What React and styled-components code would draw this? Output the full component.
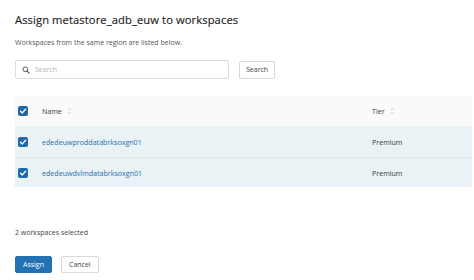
import React from "react";
import styled, { createGlobalStyle } from "styled-components";

const Global = createGlobalStyle`
  html, body { margin: 0; padding: 0; background: #fff; }
  body { font-family: "Open Sans", "Noto Sans", sans-serif; color: #333; }
  * { box-sizing: border-box; }
`;

const Page = styled.div`
  width: 474px;
  height: 280px;
  padding: 12px 2px 0 15px;
  display: flex;
  flex-direction: column;
`;

const Title = styled.h1`
  margin: 0;
  font-size: 11.2px;
  line-height: 16px;
  font-weight: 400;
  color: #222;
  letter-spacing: 0.1px;
  -webkit-text-stroke: 0.15px #222;
`;

const Subtitle = styled.p`
  margin: 8px 0 0;
  font-size: 7px;
  line-height: 14px;
  color: #555;
`;

const SearchRow = styled.div`
  margin-top: 10px;
  display: flex;
  gap: 10px;
  align-items: center;
`;

const InputBox = styled.div`
  width: 214px;
  height: 19px;
  border: 1px solid #dcdcdc;
  border-radius: 2px;
  display: flex;
  align-items: center;
  gap: 5px;
  padding: 0 6px;
  font-size: 7px;
  color: #b5b5b5;
`;

const Btn = styled.button`
  height: ${(p) => (p.$tall ? 17 : 18)}px;
  padding: 0 ${(p) => p.$px || 6}px;
  border-radius: 2px;
  font-family: inherit;
  font-size: 7px;
  border: 1px solid ${(p) => (p.$primary ? "#2272b4" : "#d9d9d9")};
  background: ${(p) => (p.$primary ? "#2272b4" : "#fff")};
  color: ${(p) => (p.$primary ? "#fff" : "#444")};
  display: flex;
  align-items: center;
  justify-content: center;
  cursor: pointer;
`;

const Table = styled.div`
  margin-top: 17px;
  display: flex;
  flex-direction: column;
`;

const Row = styled.div`
  display: grid;
  grid-template-columns: 27px 330px 1fr;
  align-items: center;
  height: ${(p) => p.$h}px;
  background: ${(p) => (p.$head ? "#fafafa" : "#e9f2f5")};
  border-top: ${(p) => (p.$divider ? "1px solid #dce7ec" : "none")};
  font-size: 7.1px;
`;

const Cell = styled.div`
  display: flex;
  align-items: center;
  gap: 5px;
  color: ${(p) => (p.$link ? "#2a6fb0" : "#3a3a3a")};
`;

const CheckCell = styled.div`
  display: flex;
  align-items: center;
  padding-left: 3px;
`;

const Box = styled.span`
  width: 10px;
  height: 10px;
  border-radius: 2px;
  background: #1f69ab;
  display: inline-flex;
  align-items: center;
  justify-content: center;
`;

const Footer = styled.div`
  margin-top: 39px;
  font-size: 7px;
  line-height: 14px;
  color: #444;
`;

const Actions = styled.div`
  margin-top: 16px;
  display: flex;
  gap: 9px;
`;

const Check = () => (
  <Box>
    <svg width="8" height="8" viewBox="0 0 8 8">
      <path d="M1.5 4.2 L3.3 5.9 L6.6 2.3" fill="none" stroke="#fff" strokeWidth="1.4" strokeLinecap="round" strokeLinejoin="round" />
    </svg>
  </Box>
);

const Sort = () => (
  <svg width="5" height="8" viewBox="0 0 5 8">
    <path d="M1 3 L2.5 1.5 L4 3" fill="none" stroke="#c4c4c4" strokeWidth="0.8" />
    <path d="M1 5 L2.5 6.5 L4 5" fill="none" stroke="#c4c4c4" strokeWidth="0.8" />
  </svg>
);

const SearchIcon = () => (
  <svg width="8" height="8" viewBox="0 0 8 8">
    <circle cx="3.3" cy="3.3" r="2.3" fill="none" stroke="#555" strokeWidth="1" />
    <path d="M5 5 L7.2 7.2" stroke="#555" strokeWidth="1.1" strokeLinecap="round" />
  </svg>
);

const rows = ["ededeuwproddatabrksoxgn01", "ededeuwdvlmdatabrksoxgn01"];

export default function App() {
  return (
    <>
      <Global />
      <Page>
        <Title>Assign metastore_adb_euw to workspaces</Title>
        <Subtitle>Workspaces from the same region are listed below.</Subtitle>
        <SearchRow>
          <InputBox>
            <SearchIcon />
            <span>Search</span>
          </InputBox>
          <Btn>Search</Btn>
        </SearchRow>
        <Table>
          <Row $head $h={30}>
            <CheckCell><Check /></CheckCell>
            <Cell>Name <Sort /></Cell>
            <Cell>Tier <Sort /></Cell>
          </Row>
          {rows.map((r, i) => (
            <Row key={r} $h={i === 0 ? 31 : 30} $divider={i > 0}>
              <CheckCell><Check /></CheckCell>
              <Cell $link>{r}</Cell>
              <Cell>Premium</Cell>
            </Row>
          ))}
        </Table>
        <Footer>2 workspaces selected</Footer>
        <Actions>
          <Btn $primary $tall $px={7}>Assign</Btn>
          <Btn $tall $px={7}>Cancel</Btn>
        </Actions>
      </Page>
    </>
  );
}
